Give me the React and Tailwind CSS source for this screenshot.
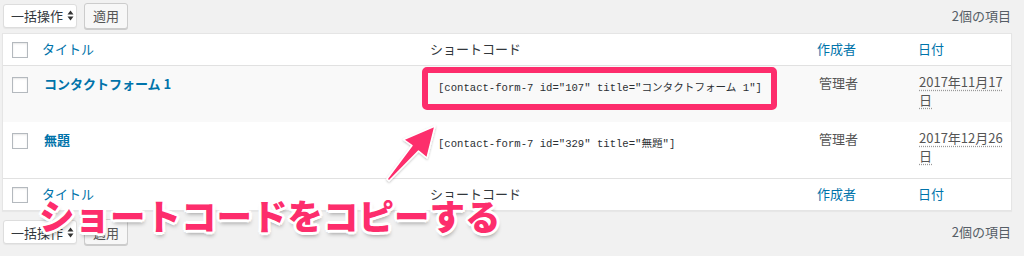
import React from "react";

const Checkbox = () => (
  <div className="w-[16px] h-[16px] bg-white border border-[#b4b9be] shadow-[inset_0_1px_2px_rgba(0,0,0,0.1)]" />
);

const SelectArrows = () => (
  <svg width="7" height="11" viewBox="0 0 7 11" className="ml-[4px]">
    <path d="M3.5 0.5 L6.5 4.5 L0.5 4.5 Z" fill="#333" />
    <path d="M3.5 10.5 L6.5 6.5 L0.5 6.5 Z" fill="#333" />
  </svg>
);

const TableNav = ({ className }) => (
  <div className={"flex items-center justify-between pl-[3px] pr-[13px] " + className}>
    <div className="flex items-center">
      <div className="w-[74px] h-[24px] bg-white border border-[#ddd] rounded-[3px] shadow-[0_1px_1px_rgba(0,0,0,0.05)] flex items-center pl-[7px] text-[13px] text-[#32373c] leading-none">
        <span>一括操作</span>
        <SelectArrows />
      </div>
      <div className="ml-[7px] w-[44px] h-[26px] bg-[#f7f7f7] border border-[#cccccc] rounded-[3px] shadow-[0_1px_0_#cccccc] flex items-center justify-center text-[13px] text-[#555] leading-none">
        適用
      </div>
    </div>
    <div className="text-[13px] text-[#555d66]">2個の項目</div>
  </div>
);

const HeadRow = ({ border }) => (
  <div className={"flex h-[32px] items-center text-[13px] " + border}>
    <div className="w-[32px] pl-[9px] flex items-center">
      <Checkbox />
    </div>
    <div className="w-[385px] pl-[7px] text-[#0073aa] pb-[2px]">タイトル</div>
    <div className="w-[387px] pl-[10px] text-[#32373c] pb-[2px]">ショートコード</div>
    <div className="w-[101px] pl-[10px] text-[#0073aa] pb-[2px]">作成者</div>
    <div className="w-[103px] pl-[10px] text-[#0073aa] pb-[2px]">日付</div>
  </div>
);

const Row = ({ bg, title, code, date }) => (
  <div className={"flex h-[56px] text-[13px] leading-[19px] " + bg}>
    <div className="w-[32px] pl-[9px] pt-[11px]">
      <Checkbox />
    </div>
    <div className="w-[385px] pl-[9px] pt-[8px] font-bold text-[#0073aa]">{title}</div>
    <div className="w-[387px] pl-[10px] pt-[10px]">
      <div className="h-[24px] flex items-center pl-[8px] font-['Liberation_Mono','Noto_Sans_CJK_JP',monospace] text-[10.6px] text-[#2b2f33] whitespace-nowrap">
        {code}
      </div>
    </div>
    <div className="w-[101px] pl-[12px] pt-[7px] text-[#555]">管理者</div>
    <div className="w-[103px] pl-[11px] pt-[7px] text-[#555] leading-[18px]">
      <div className="w-[84px] break-all">
        <span className="underline decoration-dotted decoration-[#999] underline-offset-[3px]">{date}</span>
      </div>
    </div>
  </div>
);

export default function App() {
  return (
    <div className="relative w-[1024px] h-[256px] bg-[#f1f1f1] overflow-hidden font-['Noto_Sans_CJK_JP',sans-serif]">
      <TableNav className="h-[33px] pb-[2px]" />
      <div className="ml-[2px] w-[1010px] bg-white border border-[#e5e5e5] shadow-[0_1px_1px_rgba(0,0,0,0.04)]">
        <HeadRow border="border-b border-[#e1e1e1]" />
        <Row
          bg="bg-[#f9f9f9]"
          title="コンタクトフォーム 1"
          code={'[contact-form-7 id="107" title="コンタクトフォーム 1"]'}
          date="2017年11月17日"
        />
        <Row
          bg="bg-white"
          title="無題"
          code={'[contact-form-7 id="329" title="無題"]'}
          date="2017年12月26日"
        />
        <HeadRow border="border-t border-[#e1e1e1]" />
      </div>
      <TableNav className="h-[36px] pt-[6px]" />

      {/* annotation: highlight box */}
      <div className="absolute left-[422px] top-[67px] w-[355px] h-[43px] border-[6px] border-[#fd2d6c] rounded-[5px]" />

      {/* annotation: arrow */}
      <svg className="absolute left-0 top-0" width="1024" height="256" viewBox="0 0 1024 256">
        <defs>
          <filter id="sh" x="-20%" y="-20%" width="140%" height="140%">
            <feDropShadow dx="0" dy="1" stdDeviation="1" floodColor="#000" floodOpacity="0.25" />
          </filter>
        </defs>
        <polygon
          points="435,126 427,158 418.5,151 389,181 387,179 412,145.5 403.5,139.5"
          fill="#fd2d6c"
          stroke="#ffffff"
          strokeWidth="1.5"
          strokeLinejoin="round"
          filter="url(#sh)"
        />
      </svg>

      {/* annotation: caption */}
      <div className="absolute left-[39px] top-[190px] text-[35.5px] leading-[50px] font-black text-[#fd2d6c] tracking-[0px] whitespace-nowrap [text-shadow:2px_0_0_#fff,-2px_0_0_#fff,0_2px_0_#fff,0_-2px_0_#fff,2px_2px_0_#fff,-2px_-2px_0_#fff,2px_-2px_0_#fff,-2px_2px_0_#fff,3px_0_0_#fff,-3px_0_0_#fff,0_3px_0_#fff,0_-3px_0_#fff,1px_4px_4px_rgba(0,0,0,0.35)]">
        ショートコードをコピーする
      </div>
    </div>
  );
}
